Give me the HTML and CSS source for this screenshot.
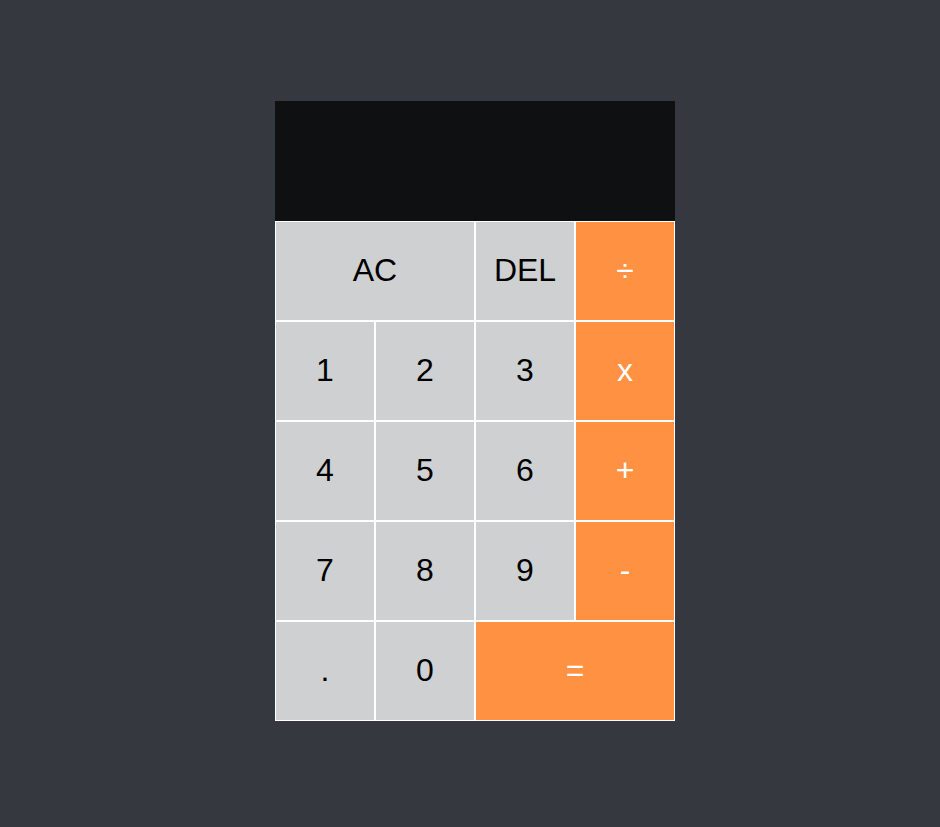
FILE: index.html
```html
<!DOCTYPE html>
<html>
<head>
<meta charset="utf-8">
<link rel="stylesheet" href="styles.css">
</head>
<body>
<div class="page">
  <div class="calculator">
    <div class="output"></div>
    <button class="key span-two">AC</button>
    <button class="key">DEL</button>
    <button class="key op">÷</button>
    <button class="key">1</button>
    <button class="key">2</button>
    <button class="key">3</button>
    <button class="key op">x</button>
    <button class="key">4</button>
    <button class="key">5</button>
    <button class="key">6</button>
    <button class="key op">+</button>
    <button class="key">7</button>
    <button class="key">8</button>
    <button class="key">9</button>
    <button class="key op">-</button>
    <button class="key">.</button>
    <button class="key">0</button>
    <button class="key op span-two">=</button>
  </div>
</div>
</body>
</html>
```
FILE: styles.css
```css
html, body {
  margin: 0;
  padding: 0;
  background: #35383f;
  height: 100%;
}
.page {
  display: flex;
  justify-content: center;
  align-items: flex-start;
  padding: 101px 0 0 10px;
  box-sizing: border-box;
  min-height: 100%;
}
.calculator {
  display: grid;
  grid-template-columns: repeat(4, 100px);
  grid-template-rows: 120px repeat(5, 100px);
}
.output {
  grid-column: 1 / -1;
  background: #0f1012;
}
.key {
  margin: 0;
  padding: 0 0 2px 0;
  border: 1px solid #ffffff;
  background: #cfd0d1;
  color: #000000;
  font-family: "Liberation Sans", Arial, sans-serif;
  font-size: 32px;
  cursor: pointer;
  outline: none;
}
.key.op {
  background: #ff9142;
  color: #ffffff;
}
.span-two {
  grid-column: span 2;
}
```
